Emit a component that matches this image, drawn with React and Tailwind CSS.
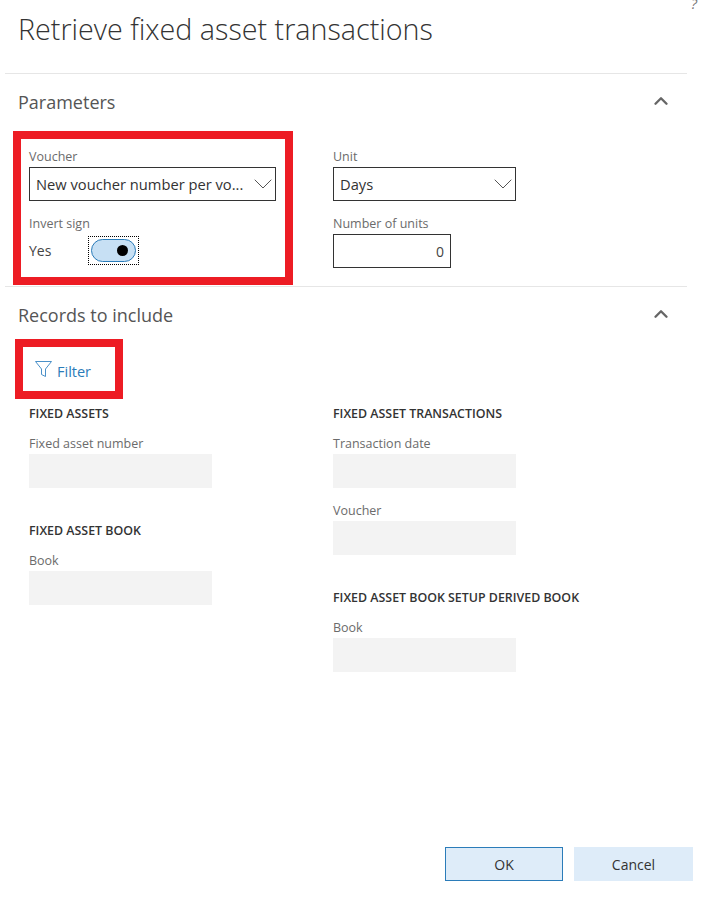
import React from 'react';
import { ChevronDown, ChevronUp } from 'lucide-react';

const font = "font-['Open_Sans',sans-serif]";

function Label({ children }) {
  return <div className="h-[20px] text-[12.5px] leading-[20px] text-[#6b6b6b]">{children}</div>;
}

function Select({ value, width }) {
  return (
    <div className={`${width} h-[34px] border border-[#333] flex items-center justify-between pl-[6px]`}>
      <span className="text-[14.7px] leading-[20px] text-[#333] whitespace-nowrap">{value}</span>
      <ChevronDown className="w-[32px] h-[32px] -mr-[4px] text-[#555]" strokeWidth={0.75} />
    </div>
  );
}

function EmptyField({ label }) {
  return (
    <div>
      <Label>{label}</Label>
      <div className="w-[183px] h-[34px] bg-[#f3f3f3]" />
    </div>
  );
}

function GroupTitle({ children }) {
  return <div className="h-[20px] text-[12.4px] leading-[22px] font-semibold text-[#333] whitespace-nowrap">{children}</div>;
}

function SectionHeader({ title }) {
  return (
    <div className="flex items-center justify-between h-[58px] pl-[13px] pr-[15px] pb-[2px]">
      <span className="text-[18px] text-[#555]">{title}</span>
      <ChevronUp className="w-[22px] h-[22px] text-[#666] -mt-[3px]" strokeWidth={2.6} />
    </div>
  );
}

export default function App() {
  return (
    <div className={`${font} relative w-[715px] h-[897px] bg-white flex flex-col overflow-hidden`}>
      {/* red highlight boxes from the docs screenshot */}
      <div className="absolute left-[13px] top-[131px] w-[280px] h-[154px] border-[8px] border-[#ed1c24]" />
      <div className="absolute left-[15px] top-[339px] w-[108px] h-[60px] border-[8px] border-[#ed1c24]" />
      <span className="absolute left-[691px] -top-[7px] text-[14px] text-[#777] italic">?</span>

      <div className="h-[73px] pl-[18px] flex items-center">
        <h1 className="text-[28.7px] font-light text-[#333] whitespace-nowrap -mt-[16px]">Retrieve fixed asset transactions</h1>
      </div>

      <div className="ml-[5px] w-[682px] h-[214px] border-t border-[#e6e6e6]">
        <SectionHeader title="Parameters" />
        <div className="flex pl-[24px] pt-[15px]">
          <div className="w-[304px] flex flex-col gap-[13px]">
            <div>
              <Label>Voucher</Label>
              <Select value="New voucher number per vo..." width="w-[247px]" />
            </div>
            <div>
              <Label>Invert sign</Label>
              <div className="flex items-center h-[34px] -mt-[1px]">
                <span className="w-[59px] text-[14px] text-[#444]">Yes</span>
                <div className="border border-dotted border-black p-[2px]">
                  <div className="w-[45px] h-[23px] rounded-full bg-[#c7e0f4] border border-[#2b7cb9] flex items-center justify-end pr-[7px]">
                    <div className="w-[11px] h-[11px] rounded-full bg-black" />
                  </div>
                </div>
              </div>
            </div>
          </div>
          <div className="flex flex-col gap-[13px]">
            <div>
              <Label>Unit</Label>
              <Select value="Days" width="w-[183px]" />
            </div>
            <div>
              <Label>Number of units</Label>
              <div className="w-[118px] h-[34px] border border-[#333] flex items-center justify-end pr-[6px] text-[14px] text-[#444]">0</div>
            </div>
          </div>
        </div>
      </div>

      <div className="-mt-[1px] ml-[5px] w-[682px] border-t border-[#e6e6e6]">
        <SectionHeader title="Records to include" />
        <div className="h-[58px] pl-[30px] pt-[14px] flex items-start gap-[5px]">
          <svg className="w-[17px] h-[16px] mt-[2px]" viewBox="0 0 17 16" fill="none" stroke="#4a90c8" strokeWidth="1">
            <path d="M.5 .5h16L10.5 8v7.5l-4-2V8z" />
          </svg>
          <span className="text-[14.5px] leading-[26px] text-[#2b7cb9]">Filter</span>
        </div>
        <div className="flex pl-[24px]">
          <div className="w-[304px] flex flex-col">
            <GroupTitle>FIXED ASSETS</GroupTitle>
            <div className="mt-[11px]">
              <EmptyField label="Fixed asset number" />
            </div>
            <div className="mt-[32px]">
              <GroupTitle>FIXED ASSET BOOK</GroupTitle>
            </div>
            <div className="mt-[11px]">
              <EmptyField label="Book" />
            </div>
          </div>
          <div className="flex flex-col">
            <GroupTitle>FIXED ASSET TRANSACTIONS</GroupTitle>
            <div className="mt-[11px] flex flex-col gap-[13px]">
              <EmptyField label="Transaction date" />
              <EmptyField label="Voucher" />
            </div>
            <div className="mt-[32px]">
              <GroupTitle>FIXED ASSET BOOK SETUP DERIVED BOOK</GroupTitle>
            </div>
            <div className="mt-[11px]">
              <EmptyField label="Book" />
            </div>
          </div>
        </div>
      </div>

      <div className="mt-auto mb-[16px] mr-[22px] flex justify-end gap-[11px]">
        <button className="w-[118px] h-[34px] bg-[#deecf9] border border-[#2b7cb9] text-[14px] text-[#333]">OK</button>
        <button className="w-[119px] h-[34px] bg-[#deecf9] text-[14px] text-[#333]">Cancel</button>
      </div>
    </div>
  );
}
